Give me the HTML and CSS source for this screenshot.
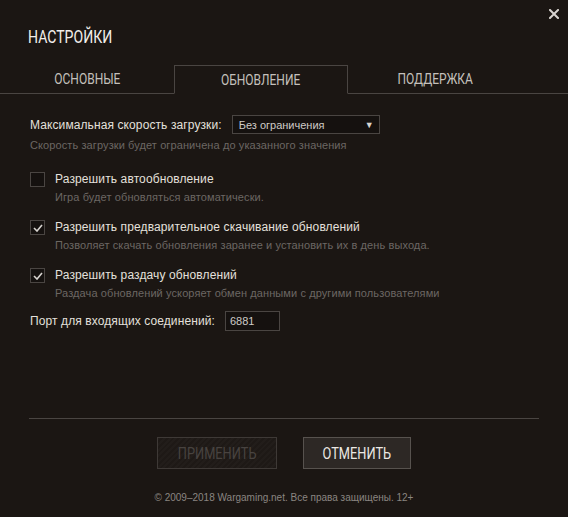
FILE: index.html
```html
<!DOCTYPE html>
<html lang="ru">
<head>
    <meta charset="UTF-8">
    <meta name="viewport" content="width=device-width, initial-scale=1.0">
    <title>Настройки</title>
    <link rel="stylesheet" href="styles.css">
</head>
<body>
    <div class="window">
        <button class="close" type="button" aria-label="Закрыть">
            <svg width="10" height="10" viewBox="0 0 10 10">
                <path d="M1 1 L9 9 M9 1 L1 9" stroke="#d8d4d0" stroke-width="2" stroke-linecap="square"/>
            </svg>
        </button>

        <h1 class="title"><span class="narrow">НАСТРОЙКИ</span></h1>

        <div class="tabs">
            <div class="tab"><span class="narrow">ОСНОВНЫЕ</span></div>
            <div class="tab active"><span class="narrow">ОБНОВЛЕНИЕ</span></div>
            <div class="tab"><span class="narrow">ПОДДЕРЖКА</span></div>
        </div>

        <div class="content">
            <div class="field-row">
                <span class="field-label">Максимальная скорость загрузки:</span>
                <div class="select">
                    <span>Без ограничения</span>
                    <span class="arrow">▼</span>
                </div>
            </div>
            <p class="hint">Скорость загрузки будет ограничена до указанного значения</p>

            <div class="option first">
                <span class="checkbox"></span>
                <div class="option-text">
                    <div class="option-label">Разрешить автообновление</div>
                    <p class="hint">Игра будет обновляться автоматически.</p>
                </div>
            </div>

            <div class="option">
                <span class="checkbox checked">
                    <svg width="10" height="8" viewBox="0 0 10 8">
                        <path d="M1 4 L4 7 L9 1" fill="none" stroke="#d8d4d0" stroke-width="1.6"/>
                    </svg>
                </span>
                <div class="option-text">
                    <div class="option-label">Разрешить предварительное скачивание обновлений</div>
                    <p class="hint">Позволяет скачать обновления заранее и установить их в день выхода.</p>
                </div>
            </div>

            <div class="option">
                <span class="checkbox checked">
                    <svg width="10" height="8" viewBox="0 0 10 8">
                        <path d="M1 4 L4 7 L9 1" fill="none" stroke="#d8d4d0" stroke-width="1.6"/>
                    </svg>
                </span>
                <div class="option-text">
                    <div class="option-label">Разрешить раздачу обновлений</div>
                    <p class="hint">Раздача обновлений ускоряет обмен данными с другими пользователями</p>
                </div>
            </div>

            <div class="field-row port-row">
                <span class="field-label">Порт для входящих соединений:</span>
                <div class="port-input">6881</div>
            </div>
        </div>

        <div class="footer">
            <div class="buttons">
                <button class="btn btn-apply" type="button" disabled><span class="narrow">ПРИМЕНИТЬ</span></button>
                <button class="btn btn-cancel" type="button"><span class="narrow">ОТМЕНИТЬ</span></button>
            </div>
            <p class="copyright">© 2009–2018 Wargaming.net. Все права защищены. 12+</p>
        </div>
    </div>
</body>
</html>
```

FILE: styles.css
```css
:root {
    --bg: #1b1613;
    --line: #4a4542;
    --text: #e4e0dc;
    --muted: #6c6763;
    --field-bg: #15110f;
}

* {
    margin: 0;
    padding: 0;
    box-sizing: border-box;
}

body {
    background-color: var(--bg);
    font-family: "Liberation Sans", Arial, sans-serif;
    color: var(--text);
}

.window {
    position: relative;
    width: 568px;
    height: 517px;
    display: flex;
    flex-direction: column;
}

.close {
    position: absolute;
    top: 9px;
    right: 9px;
    width: 10px;
    height: 10px;
    border: none;
    background: none;
    display: flex;
}

/* узкий заголовочный шрифт */
.narrow {
    display: inline-block;
    font-family: "Roboto", sans-serif;
    transform: scaleX(0.8);
}

.title {
    font-weight: normal;
    font-size: 19px;
    line-height: 20px;
    color: #f2eeea;
    padding: 27px 0 0 28px;
    height: 65px;
}

.title .narrow {
    transform-origin: left center;
    transform: scaleX(0.74);
}

.tabs {
    display: flex;
    height: 29px;
    border-bottom: 1px solid var(--line);
}

.tab {
    width: 174px;
    font-size: 15px;
    color: #c4c0bc;
    text-align: center;
    line-height: 28px;
}

.tab.active {
    border: 1px solid var(--line);
    border-bottom: 1px solid var(--bg);
    margin-bottom: -1px;
    height: 29px;
    line-height: 27px;
}

.content {
    flex: 1;
    padding: 21px 0 0 30px;
}

.field-row {
    display: flex;
    align-items: center;
    height: 19px;
}

.field-label {
    font-size: 12px;
    letter-spacing: 0.1px;
    margin-right: 10px;
}

.select {
    width: 148px;
    height: 19px;
    border: 1px solid var(--line);
    background-color: var(--field-bg);
    display: flex;
    justify-content: space-between;
    align-items: center;
    padding: 0 5px 0 6px;
    font-size: 11px;
    color: #cfcbc7;
}

.arrow {
    font-size: 9px;
    color: #d8d4d0;
}

.hint {
    font-size: 11px;
    line-height: 14px;
    letter-spacing: 0.1px;
    color: var(--muted);
    margin-top: 4px;
}

.option {
    display: flex;
    align-items: flex-start;
    margin-top: 16px;
}

.option.first {
    margin-top: 20px;
}

.checkbox {
    width: 15px;
    height: 15px;
    border: 1px solid var(--line);
    background-color: var(--field-bg);
    margin-right: 10px;
    display: flex;
    align-items: center;
    justify-content: center;
}

.option-label {
    font-size: 12px;
    line-height: 15px;
    letter-spacing: 0.12px;
}

.option-text .hint {
    margin-top: 3px;
}

.port-row {
    margin-top: 11px;
    height: 20px;
}

.port-input {
    width: 55px;
    height: 20px;
    border: 1px solid var(--line);
    background-color: var(--field-bg);
    font-size: 11px;
    line-height: 18px;
    padding-left: 4px;
    color: #cfcbc7;
}

.footer {
    margin: 0 29px;
    border-top: 1px solid var(--line);
    padding-top: 18px;
    height: 99px;
}

.buttons {
    display: flex;
    justify-content: center;
    gap: 26px;
}

.btn {
    height: 32px;
    font-size: 16px;
    color: #ece8e4;
    background-color: #2d2825;
    border: 1px solid #57524e;
}

.btn-apply {
    width: 120px;
    color: #484340;
    border-color: #3e3936;
    background: repeating-linear-gradient(135deg, #221d1a 0 2px, #1e1916 2px 4px);
}

.btn-cancel {
    width: 108px;
}

.copyright {
    text-align: center;
    font-size: 10px;
    color: #8a8581;
    margin-top: 23px;
}
```
